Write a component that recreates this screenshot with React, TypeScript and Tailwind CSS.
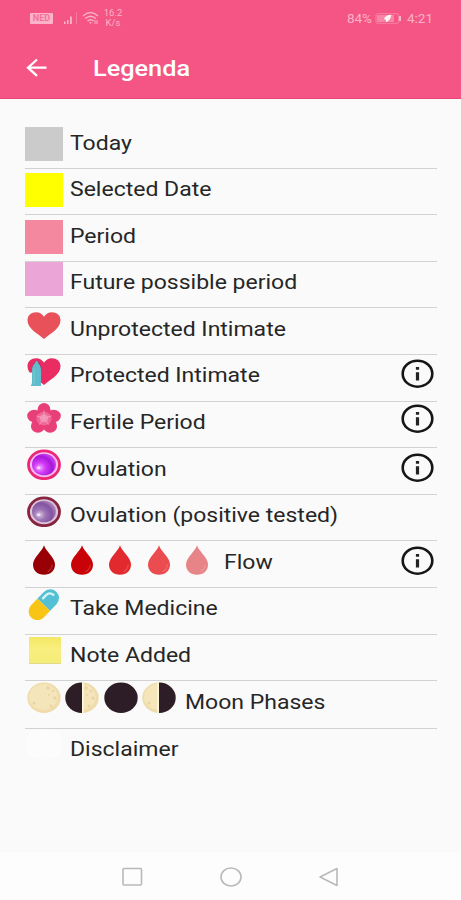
import type { ReactNode } from 'react';

function Swatch({ className }: { className: string }) {
  return <div className={`h-[34px] w-[38px] ${className}`} />;
}

const HEART = 'M17 26 C12 21.5 0.5 16.5 0.5 8 C0.5 3 4.5 0.3 9 0.3 C12.6 0.3 15.5 2 17 4.6 C18.5 2 21.4 0.3 25 0.3 C29.5 0.3 33.5 3 33.5 8 C33.5 16.5 22 21.5 17 26 Z';

function Heart() {
  return (
    <svg className="ml-[2px] h-[27px] w-[34px]" viewBox="0 0 34 26" preserveAspectRatio="none">
      <path d={HEART} fill="#e9515a" />
    </svg>
  );
}

function ProtectedHeart() {
  return (
    <svg className="ml-[2px] h-[28px] w-[34px]" viewBox="0 0 34 27" preserveAspectRatio="none">
      <path d={HEART} fill="#e92c62" />
      <path d="M0 14 H5 V27 H0 Z" fill="#fafafa" />
      <path d="M5 10 Q5 6.5 8 4 L9.5 2.5 Q13.5 5 14.5 10 Z" fill="#a32a66" />
      <path d="M3.8 27 Q5 25.5 5 23 V12 Q5.2 6.5 7.8 5.2 Q8.3 2.8 9.7 2.8 Q11 2.8 11.5 5.2 Q14 7 14 12 V27 Z" fill="#5fbccb" />
      <path d="M7.2 10 V26" stroke="#76c6d3" strokeWidth="1.2" />
    </svg>
  );
}

function Flower() {
  return (
    <svg className="ml-[2px] h-[30px] w-[34px]" viewBox="0 0 34 30" preserveAspectRatio="none">
      <g fill="#e83f79">
        <ellipse cx="17" cy="6.9" rx="6.5" ry="6.8" />
        <ellipse cx="7.4" cy="13" rx="7.2" ry="6.2" />
        <ellipse cx="26.6" cy="13" rx="7.2" ry="6.2" />
        <ellipse cx="10.9" cy="23" rx="7" ry="6.7" />
        <ellipse cx="23.1" cy="23" rx="7" ry="6.7" />
      </g>
      <ellipse cx="17" cy="15.6" rx="7.6" ry="6.8" fill="#ee6796" />
      <ellipse cx="17" cy="15.3" rx="4.3" ry="4" fill="#f38fb2" />
      <path d="M17 15 V7.5 M17 15 L24.5 13 M17 15 L21.5 21.5 M17 15 L12.5 21.5 M17 15 L9.5 13" stroke="#f59fbe" strokeWidth="0.9" />
    </svg>
  );
}

function Ovum({ tested = false }: { tested?: boolean }) {
  const id = tested ? 'ovum-tested' : 'ovum';
  return (
    <svg className="ml-[2px] h-[31px] w-[34px]" viewBox="0 0 34 31">
      <defs>
        <radialGradient id={id} cx="0.32" cy="0.65" r="0.7">
          <stop offset="0" stopColor={tested ? '#d9c4e6' : '#f4a5ff'} />
          <stop offset="0.35" stopColor={tested ? '#9e75b5' : '#d13bf5'} />
          <stop offset="0.75" stopColor={tested ? '#8253a0' : '#a716dc'} />
          <stop offset="1" stopColor={tested ? '#ad84bd' : '#cc43ee'} />
        </radialGradient>
      </defs>
      <ellipse cx="17" cy="15.8" rx="15.5" ry="13.9" fill={tested ? '#dfc5d9' : '#f8bbee'} stroke={tested ? '#862641' : '#ed2778'} strokeWidth="2.8" />
      <ellipse cx="17" cy="15.5" rx="12" ry="10.8" fill={`url(#${id})`} />
      <ellipse cx="11.5" cy="18.8" rx="2" ry="1.5" fill="#fff" opacity="0.6" />
    </svg>
  );
}

const DROPS = ['#980005', '#c80207', '#e2292e', '#eb4c50', '#e68487'];

function Drops() {
  return (
    <div className="flex w-[192px] gap-[16.4px] pl-[7.5px]">
      {DROPS.map((color) => (
        <svg key={color} className="h-[30px] w-[22px] shrink-0" viewBox="0 0 22 30">
          <path d="M11 0.3 C13 6.8 22 12.5 22 19.5 C22 25.7 17.4 29.8 11 29.8 C4.6 29.8 0 25.7 0 19.5 C0 12.5 9 6.8 11 0.3 Z" fill={color} />
          <path d="M19.3 19.5 Q18.9 24.5 14.5 26.8" fill="none" stroke="#fff" strokeWidth="1.2" opacity="0.18" />
        </svg>
      ))}
    </div>
  );
}

function Pill() {
  return (
    <svg className="ml-[3px] h-[31px] w-[32px]" viewBox="0 0 32 31">
      <g transform="translate(15.8 15.7) rotate(-46)">
        <path d="M0 -8.8 H-9.2 A8.8 8.8 0 0 0 -9.2 8.8 H0 Z" fill="#f9c515" />
        <path d="M0 -8.8 H9.2 A8.8 8.8 0 0 1 9.2 8.8 H0 Z" fill="#55bfd3" />
        <path d="M4 -5 H9 Q13.2 -4.7 13.8 0" fill="none" stroke="#d9f4f8" strokeWidth="2.3" strokeLinecap="round" />
      </g>
    </svg>
  );
}

function Note() {
  return <div className="ml-[4px] h-[27px] w-[32px] border-b border-[#dfda8c] bg-linear-to-b from-[#f4e765] via-[#f8ef7f] to-[#f4ec78]" />;
}

function Moon({ dark }: { dark: 'none' | 'left' | 'all' | 'right' }) {
  return (
    <svg className="h-[31px] w-[34px] shrink-0" viewBox="0 0 34 31">
      <ellipse cx="17" cy="15.7" rx="16.7" ry="15.2" fill={dark === 'all' ? '#2d1d27' : '#efdcaa'} />
      {dark !== 'all' && (
        <g>
          <ellipse cx="16.3" cy="15" rx="14.3" ry="12.9" fill="#f5e5bb" />
          <g fill="#ead4a2">
            <circle cx="21" cy="6" r="1.8" />
            <circle cx="26" cy="9" r="1.3" />
            <circle cx="28" cy="16" r="1.7" />
            <circle cx="22" cy="13" r="1" />
            <circle cx="7" cy="21" r="1.5" />
            <circle cx="24" cy="24" r="1.4" />
          </g>
        </g>
      )}
      {dark === 'left' && (
        <>
          <path d="M17 0.5 A16.7 15.2 0 0 0 17 30.9 Z" fill="#2d1d27" />
          <path d="M17.8 0.5 V30.9" stroke="#fff8dd" strokeWidth="1.6" />
        </>
      )}
      {dark === 'right' && (
        <>
          <path d="M17 0.5 A16.7 15.2 0 0 1 17 30.9 Z" fill="#2d1d27" />
          <path d="M16.2 0.5 V30.9" stroke="#fff8dd" strokeWidth="1.6" />
        </>
      )}
    </svg>
  );
}

function Moons() {
  return (
    <div className="flex w-[153px] gap-[4.6px] pl-[1.6px]">
      <Moon dark="none" />
      <Moon dark="left" />
      <Moon dark="all" />
      <Moon dark="right" />
    </div>
  );
}

function Info() {
  return (
    <svg className="h-[29px] w-[33px]" viewBox="0 0 33 29">
      <ellipse cx="16.5" cy="14.7" rx="14.8" ry="13" fill="none" stroke="#161616" strokeWidth="2.6" />
      <path d="M16.5 8 V10.8 M16.5 13.2 V21.6" stroke="#222" strokeWidth="3.2" />
    </svg>
  );
}

type Item = { label: string; icon: ReactNode; pad: string; info?: string; height?: string };

const ITEMS: Item[] = [
  { label: 'Today', icon: <Swatch className="bg-[#cbcbcb]" />, pad: 'pt-[5px]' },
  { label: 'Selected Date', icon: <Swatch className="bg-[#ffff00]" />, pad: 'pt-[4.4px]' },
  { label: 'Period', icon: <Swatch className="bg-[#f4889f]" />, pad: 'pt-[5px]' },
  { label: 'Future possible period', icon: <Swatch className="bg-[#eba6d7]" />, pad: 'pt-0' },
  { label: 'Unprotected Intimate', icon: <Heart />, pad: 'pt-[3.4px]' },
  { label: 'Protected Intimate', icon: <ProtectedHeart />, pad: 'pt-[3px]', info: 'pt-[4.4px]' },
  { label: 'Fertile Period', icon: <Flower />, pad: 'pt-[1px]', info: 'pt-[2px]' },
  { label: 'Ovulation', icon: <Ovum />, pad: 'pt-[1px]', info: 'pt-[4.4px]' },
  { label: 'Ovulation (positive tested)', icon: <Ovum tested />, pad: 'pt-[1px]' },
  { label: 'Flow', icon: <Drops />, pad: 'pt-[3.4px]', info: 'pt-[4.6px]' },
  { label: 'Take Medicine', icon: <Pill />, pad: 'pt-[1.4px]' },
  { label: 'Note Added', icon: <Note />, pad: 'pt-[2.4px]' },
  { label: 'Moon Phases', icon: <Moons />, pad: 'pt-[1px]', height: 'h-[47.6px]' },
  { label: 'Disclaimer', icon: <div className="h-[30px] w-[38px] rounded-full bg-[#fcfcfc]" />, pad: 'pt-0' },
];

function LegendRow({ item, last }: { item: Item; last: boolean }) {
  return (
    <li className={`flex items-start ${item.height ?? 'h-[46.6px]'} ${last ? '' : 'border-b border-[#d2d2d2]'}`}>
      <div className={`min-w-[38px] shrink-0 ${item.pad}`}>{item.icon}</div>
      <span className="ml-[6.5px] origin-left scale-x-[1.15] pt-[7.5px] text-[20px] leading-[26px] whitespace-nowrap text-[#262626]">
        {item.label}
      </span>
      {item.info && <div className={`mr-[3px] ml-auto ${item.info}`}><Info /></div>}
    </li>
  );
}

function StatusBar() {
  return (
    <div className="flex h-[36px] items-center pr-[28px] pl-[30px] text-[#fbb3ca]">
      <div className="flex h-[11px] w-[23px] items-center justify-center rounded-[1px] bg-[#fbb3ca] text-[9px] leading-none font-bold text-[#f76f97]">
        <span>NED</span>
      </div>
      <svg className="ml-[10px] h-[14px] w-[17px]" viewBox="0 0 17 14" fill="currentColor">
        <path d="M1 10.5 h1.6 v2.5 h-1.6z M4 9 h1.6 v4 h-1.6z M7 5.5 h1.8 v7.5 h-1.8z" />
        <path d="M13 1 h1 v12 h-1z" opacity="0.4" />
      </svg>
      <svg className="ml-[2px] h-[14px] w-[17px]" viewBox="0 0 17 14" fill="none" stroke="currentColor" strokeWidth="1.4">
        <path d="M1 5 Q8.5 -2 16 5 M3.2 7.5 Q8.5 2.8 13.8 7.5 M5.5 10 Q8.5 7.3 11.5 10" />
        <path d="M7 11.2 h3 l-1.5 1.8z" fill="currentColor" stroke="none" />
        <path d="M13 9 v4 M15 9 v4" strokeWidth="1" />
      </svg>
      <div className="ml-[4px] flex w-[20px] flex-col items-center text-[9.5px] leading-[10px]">
        <span>16.2</span>
        <span>K/s</span>
      </div>
      <span className="ml-auto text-[13.5px] leading-[16px]">84%</span>
      <svg className="ml-[3px] h-[11px] w-[27px]" viewBox="0 0 27 11">
        <rect x="1" y="0.7" width="22.5" height="9.6" rx="1.5" fill="none" stroke="#fbb3ca" strokeWidth="1" opacity="0.45" />
        <rect x="2" y="2" width="17" height="7" fill="#fbb3ca" opacity="0.5" />
        <path d="M24 3 h2 v5 h-2z" fill="#fbb3ca" />
        <path d="M9 6 Q10 2 16.5 1.8 Q15 8 11 9.3 L11 7 Z" fill="#fff" opacity="0.9" />
      </svg>
      <span className="ml-[5px] text-[13.5px] leading-[16px]">4:21</span>
    </div>
  );
}

export default function App() {
  return (
    <div className="flex h-[900px] w-[461px] flex-col bg-[#fafafa] font-['Roboto',sans-serif]">
      <header className="h-[99px] shrink-0 border-b border-[#e74679] bg-[#f45584]">
        <StatusBar />
        <div className="flex h-[63px] items-center pl-[26px]">
          <svg className="h-[20px] w-[22px]" viewBox="0 0 22 20" fill="none" stroke="#fff" strokeWidth="2.3">
            <path d="M20.5 9.7 H2 M11 1.5 L2 9.7 L11 17.9" />
          </svg>
          <h1 className="ml-[45px] origin-left scale-x-[1.15] pt-[2px] text-[22px] leading-[28px] font-medium text-white">Legenda</h1>
        </div>
      </header>
      <ul className="mt-[23px] mr-[24px] ml-[25px] grow">
        {ITEMS.map((item, i) => (
          <LegendRow key={item.label} item={item} last={i === ITEMS.length - 1} />
        ))}
      </ul>
      <nav className="flex h-[48px] shrink-0 items-center justify-center gap-[77px] bg-[#fdfdfd] pt-[2px]">
        <svg className="h-[20px] w-[22px]" viewBox="0 0 22 20" fill="none" stroke="#b9b9b9" strokeWidth="1.6">
          <rect x="2" y="1.5" width="18.5" height="16.5" rx="1" />
        </svg>
        <svg className="h-[20px] w-[22px]" viewBox="0 0 22 20" fill="none" stroke="#b9b9b9" strokeWidth="1.6">
          <ellipse cx="11" cy="10" rx="10" ry="9" />
        </svg>
        <svg className="h-[20px] w-[22px]" viewBox="0 0 22 20" fill="none" stroke="#b9b9b9" strokeWidth="1.6" strokeLinejoin="round">
          <path d="M18 1.5 V18.5 L1 10 Z" />
        </svg>
      </nav>
    </div>
  );
}
